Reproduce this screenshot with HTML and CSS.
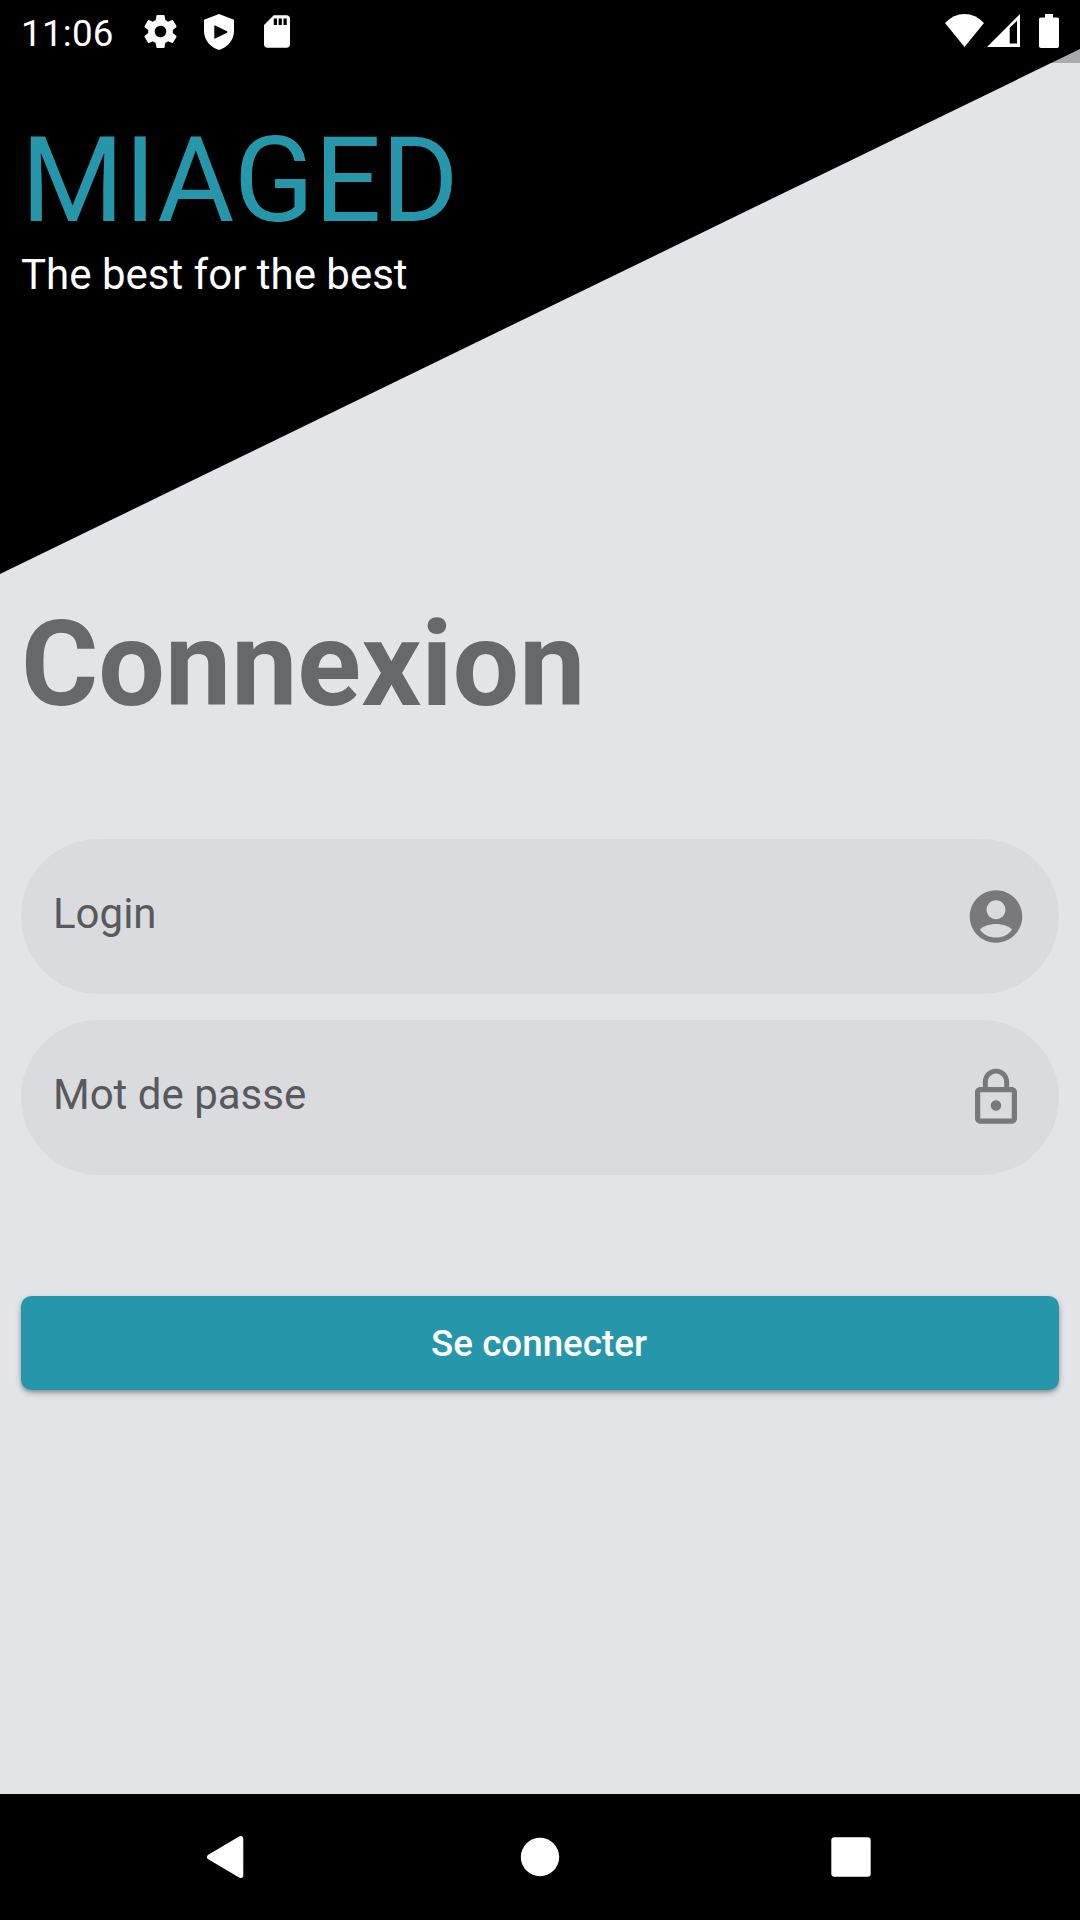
FILE: index.html
```html
<!DOCTYPE html>
<html lang="fr">
<head>
<meta charset="utf-8">
<title>MIAGED</title>
<link rel="stylesheet" href="styles.css">
</head>
<body>
<div class="screen">
  <header class="hero">
    <div class="status-bar">
      <span class="clock">11:06</span>
      <svg class="icon-gear" viewBox="2 2 20 20"><path d="M19.43 12.98c.04-.32.07-.64.07-.98s-.03-.66-.07-.98l2.11-1.65c.19-.15.24-.42.12-.64l-2-3.46c-.12-.22-.39-.3-.61-.22l-2.49 1c-.52-.4-1.08-.73-1.69-.98l-.38-2.65C14.46 2.18 14.25 2 14 2h-4c-.25 0-.46.18-.49.42l-.38 2.65c-.61.25-1.17.59-1.69.98l-2.49-1c-.23-.09-.49 0-.61.22l-2 3.46c-.13.22-.07.49.12.64l2.11 1.65c-.04.32-.07.65-.07.98s.03.66.07.98l-2.11 1.65c-.19.15-.24.42-.12.64l2 3.46c.12.22.39.3.61.22l2.49-1c.52.4 1.08.73 1.69.98l.38 2.65c.03.24.24.42.49.42h4c.25 0 .46-.18.49-.42l.38-2.65c.61-.25 1.17-.59 1.69-.98l2.49 1c.23.09.49 0 .61-.22l2-3.46c.12-.22.07-.49-.12-.64l-2.11-1.65zM12 15.5c-1.93 0-3.5-1.57-3.5-3.5s1.57-3.5 3.5-3.5 3.5 1.57 3.5 3.5-1.57 3.5-3.5 3.5z"/></svg>
      <svg class="icon-shield" viewBox="0 0 30 36"><path fill-rule="evenodd" d="M15 0 30 5.7V17C30 26 23.500 33.500 15 36 6.500 33.500 0 26 0 17V5.700ZM10.300 11.800V24.200Q10.300 25 11 24.600L23 18.700Q23.700 18 23 17.300L11 11.400Q10.300 11 10.300 11.800Z"/></svg>
      <svg class="icon-sd" viewBox="4 2 16 20"><path d="M18 2h-8L4.020 8 4 20c0 1.100.9 2 2 2h12c1.100 0 2-.9 2-2V4c0-1.100-.9-2-2-2zm-6 6h-2V4h2v4zm3 0h-2V4h2v4zm3 0h-2V4h2v4z"/></svg>
      <svg class="icon-wifi" viewBox="0 0 39 33"><path d="M19.500 33 0 9Q8.500 0 19.500 0T39 9Z"/></svg>
      <svg class="icon-signal" viewBox="0 0 33 33"><path fill-rule="evenodd" d="M0 33 33 0V33ZM22.700 13.700V29.500H30V6.800Z"/></svg>
      <svg class="icon-battery" viewBox="0 0 20 34"><path d="M6 0H14V3.500H18.500Q20 3.500 20 5V32Q20 34 18 34H2Q0 34 0 32V5Q0 3.500 1.500 3.500H6Z"/></svg>
    </div>
    <h1 class="brand">MIAGED</h1>
    <p class="tagline">The best for the best</p>
  </header>
  <main class="login">
    <h2 class="title">Connexion</h2>
    <div class="fields">
      <div class="field">
        <span class="label">Login</span>
        <svg class="field-icon" viewBox="0 0 24 24"><path d="M12 2C6.480 2 2 6.480 2 12s4.480 10 10 10 10-4.480 10-10S17.520 2 12 2zm0 3.800c1.980 0 3.600 1.620 3.600 3.600S13.980 13 12 13 8.400 11.380 8.400 9.400 10.020 5.800 12 5.800zM12 20c-2.500 0-4.710-1.100-6.100-2.980.9-1.200 3.700-2.120 6.100-2.120s5.200.92 6.100 2.120C16.710 18.900 14.500 20 12 20z"/></svg>
      </div>
      <div class="field">
        <span class="label">Mot de passe</span>
        <svg class="field-icon" viewBox="0 0 24 24"><path d="M12 17c1.100 0 2-.9 2-2s-.9-2-2-2-2 .9-2 2 .9 2 2 2zm6-9h-1V6c0-2.760-2.240-5-5-5S7 3.240 7 6v2H6c-1.100 0-2 .9-2 2v10c0 1.100.9 2 2 2h12c1.100 0 2-.9 2-2V10c0-1.100-.9-2-2-2zM8.900 6c0-1.710 1.390-3.100 3.100-3.100s3.100 1.390 3.100 3.100v2H8.900V6zM18 20H6V10h12v10z"/></svg>
      </div>
    </div>
    <button class="submit" type="button">Se connecter</button>
  </main>
  <nav class="nav-bar">
    <svg class="nav-icon" viewBox="0 0 60 60"><path class="rounded" d="M9.500 30 40.800 11.500V48.500Z"/></svg>
    <svg class="nav-icon" viewBox="0 0 60 60"><circle cx="30" cy="30" r="19.200"/></svg>
    <svg class="nav-icon" viewBox="0 0 60 60"><rect x="11.300" y="10.300" width="39.400" height="39.400" rx="3"/></svg>
  </nav>
</div>
</body>
</html>
```
FILE: styles.css
```css
* { box-sizing: border-box; }

body {
  margin: 0;
  font-family: Roboto, "Liberation Sans", sans-serif;
  line-height: 1.171875;
}

svg { display: block; flex: none; fill: #fff; }

.screen {
  width: 1080px;
  height: 1920px;
  display: flex;
  flex-direction: column;
  background: #e2e4e8;
  overflow: hidden;
}

/* black diagonal banner, with the translucent status strip over its corner */
.hero {
  height: 574px;
  flex: none;
  background: linear-gradient(rgba(0, 0, 0, .25), rgba(0, 0, 0, .25)) 0 0 / 100% 63px no-repeat;
  position: relative;
  isolation: isolate;
}

.hero::before {
  content: "";
  position: absolute;
  inset: 0;
  z-index: -1;
  background: #000;
  clip-path: polygon(0 0, 100% 0, 100% 49px, 0 100%);
}

.status-bar {
  height: 63px;
  padding: 0 21px;
  display: flex;
  align-items: center;
}

.clock {
  width: 123px;
  padding-top: 4px;
  color: #fff;
  font-size: 36.75px;
  letter-spacing: .25px;
}

.icon-gear { width: 33px; height: 33px; }
.icon-shield { width: 30px; height: 36px; margin-left: 27px; }
.icon-sd { width: 26px; height: 33px; margin-left: 30px; }
.icon-wifi { width: 39px; height: 33px; margin: -2px 0 0 auto; }
.icon-signal { width: 33px; height: 33px; margin: -2px 0 0 3px; }
.icon-battery { width: 20px; height: 34px; margin: -1px 0 0 19px; }

.brand {
  margin: 49px 0 0 21px;
  color: #2697aa;
  font-size: 118.125px;
  font-weight: 400;
}

.tagline { margin: 0 0 0 21px; color: #fff; font-size: 42px; }

.login {
  flex: 1;
  padding: 22px 21px 0;
  display: flex;
  flex-direction: column;
}

.title { margin: 0; color: #67686a; font-size: 118.125px; font-weight: 700; }

.fields { margin-top: 105px; display: grid; gap: 26px; }

.field {
  height: 155px;
  padding: 0 31px 0 32px;
  border-radius: 78px;
  background: #dadbdf;
  display: flex;
  align-items: center;
  justify-content: space-between;
}

.label { color: #58595b; font-size: 42px; padding-bottom: 6px; }
.field-icon { width: 64px; height: 63px; fill: #79797b; }

.submit {
  height: 94px;
  margin-top: 121px;
  padding: 0 2px 0 0;
  border: 0;
  border-radius: 10.5px;
  background: #2697aa;
  color: #fff;
  font: 500 36.75px/1.171875 Roboto, "Liberation Sans", sans-serif;
  box-shadow: 0 3px 6px rgba(0, 0, 0, .28), 0 2px 3px rgba(0, 0, 0, .14);
}

.nav-bar {
  height: 126px;
  flex: none;
  padding: 0 75px;
  background: #000;
  display: grid;
  grid-template-columns: repeat(3, 1fr);
  place-items: center;
}

.nav-icon { width: 60px; height: 60px; }
.rounded { stroke: #fff; stroke-width: 5; stroke-linejoin: round; }
```
